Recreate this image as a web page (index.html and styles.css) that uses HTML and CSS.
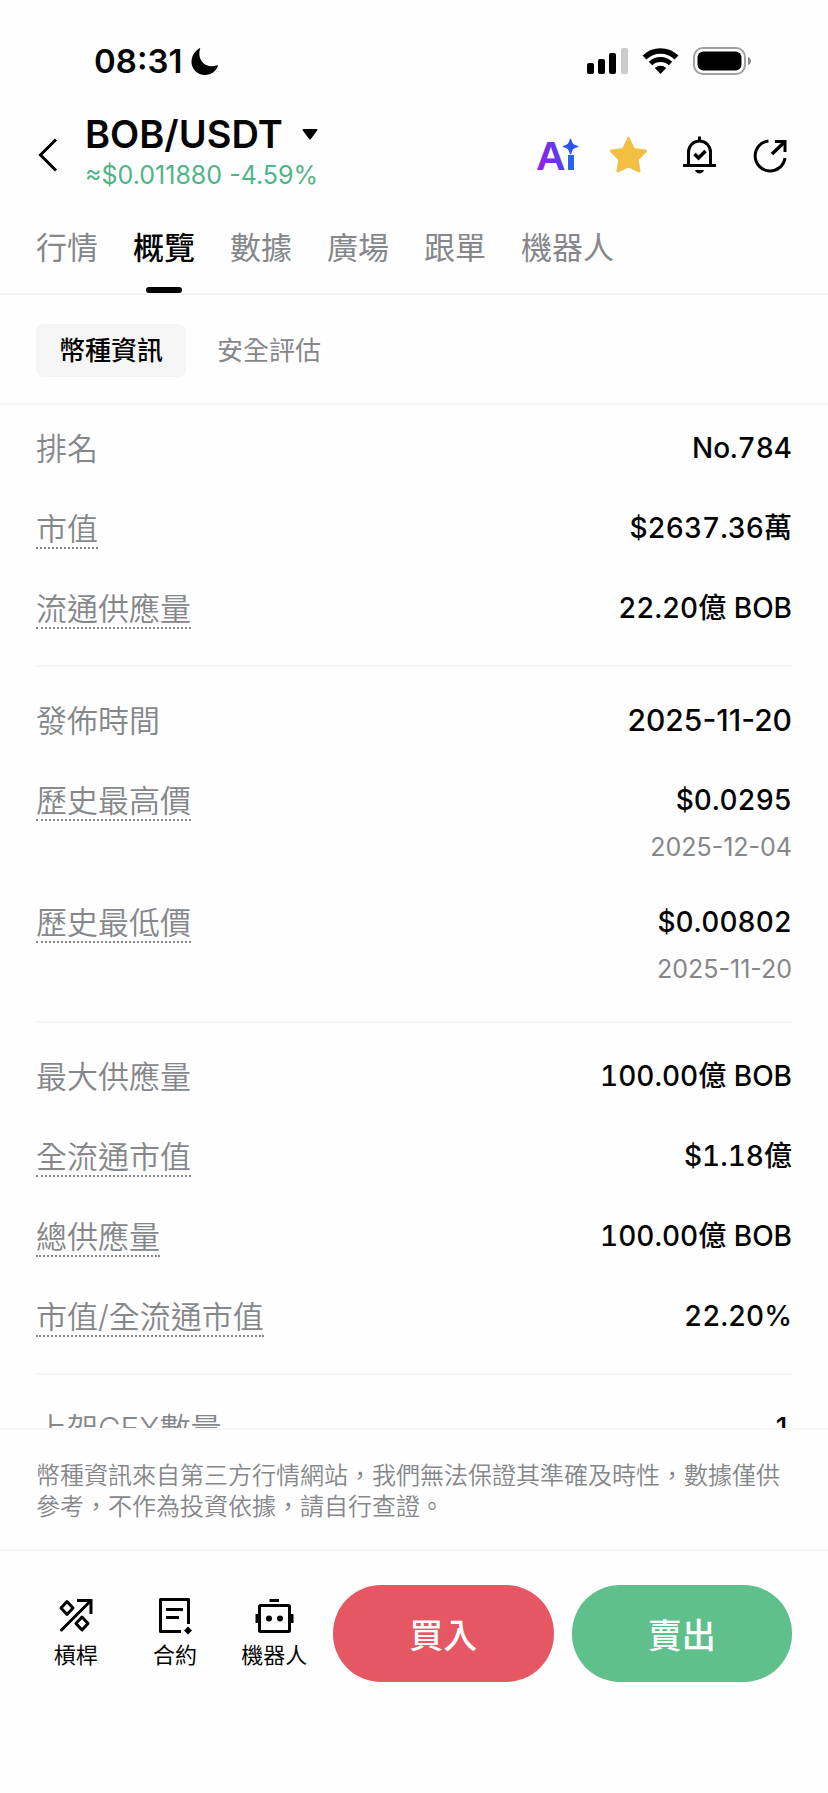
FILE: index.html
```html
<!DOCTYPE html>
<html lang="zh-Hant">
<head>
    <meta charset="UTF-8">
    <meta name="viewport" content="width=device-width, initial-scale=1.0">
    <title>BOB/USDT</title>
    <link rel="stylesheet" href="styles.css">
</head>

<body>

<div class="app">
    <!-- Status bar -->
    <div class="status">
        <div class="status-left">
            <span class="time">08:31</span>
            <svg width="27" height="27" viewBox="0 0 28 28"><path d="M9.500 0.500C7 8 10 16 18 18.500c3.500 1 6.500.5 9-.5.7-.3 1.100.1.900.7C26 24 21 28 14.500 28 7 28 .5 22 .5 14.500.5 8.500 4 3 8.800.2c.5-.3.900-.1.700.3z"/></svg>
        </div>
        <div class="status-right">
            <svg width="42" height="28" viewBox="0 0 42 28">
                <rect x="1" y="16" width="7" height="11" rx="2"/>
                <rect x="12" y="12" width="7" height="15" rx="2"/>
                <rect x="23" y="6" width="7" height="21" rx="2"/>
                <rect x="35" y="1" width="7" height="26" rx="2" fill="#cbcbcb"/>
            </svg>
            <svg width="37" height="28" viewBox="0 0 37 28">
                <path d="M2.500 10.500a23 23 0 0 1 32 0" fill="none" stroke="#000" stroke-width="5.500"/>
                <path d="M8.500 16.500a14.500 14.500 0 0 1 20 0" fill="none" stroke="#000" stroke-width="5"/>
                <path d="M12.800 21a8.600 8.600 0 0 1 11.400 0L18.500 27z"/>
            </svg>
            <svg width="59" height="28" viewBox="0 0 59 28">
                <rect x="1" y="1" width="51" height="26" rx="9" fill="none" stroke="#a0a0a0" stroke-width="2"/>
                <rect x="4.500" y="4.500" width="44" height="19" rx="6"/>
                <path d="M55 10c4 1 4 7 0 8z" fill="#8c8c8c"/>
            </svg>
        </div>
    </div>

    <!-- Header -->
    <header class="header">
        <button class="icon-btn back" aria-label="返回">
            <svg width="20" height="34" viewBox="0 0 20 34"><path d="M18 1.500L2.500 17 18 32.500" fill="none" stroke="#000" stroke-width="3"/></svg>
        </button>
        <div class="pair">
            <button class="pair-name">BOB/USDT
                <svg width="16" height="11" viewBox="0 0 16 11"><path d="M1.500 0h13c1 0 1.300.8.700 1.500L8.900 10c-.5.700-1.300.7-1.800 0L.8 1.500C.2.8.5 0 1.500 0z"/></svg>
            </button>
            <p class="pair-price">≈$0.011880 -4.59%</p>
        </div>
        <div class="actions">
            <button class="icon-btn" aria-label="Ai">
                <svg width="44" height="44" viewBox="0 0 44 44">
                    <defs>
                        <linearGradient id="ai" gradientUnits="userSpaceOnUse" x1="2" y1="36" x2="42" y2="26">
                            <stop offset="0" stop-color="#9b1fe8"/>
                            <stop offset=".5" stop-color="#6a35ea"/>
                            <stop offset="1" stop-color="#1f62f5"/>
                        </linearGradient>
                    </defs>
                    <text class="ai-letter" x="1" y="37" fill="url(#ai)">A</text>
                    <rect x="33" y="22" width="6" height="15" fill="#2b62f2"/>
                    <path d="M35.500 6.500c1 4.500 2.500 6 7 7-4.500 1-6 2.500-7 7-1-4.500-2.500-6-7-7 4.500-1 6-2.500 7-7z" fill="#2f55f0" stroke="#2f55f0" stroke-width="1.500" stroke-linejoin="round"/>
                </svg>
            </button>
            <button class="icon-btn" aria-label="收藏">
                <svg width="44" height="44" viewBox="0 0 44 44"><path d="M22.500 5.500l5 11 12 1.500-8.500 8.500 2 11.500-10.500-5-10.500 5 2-11.500L5.500 18l12-1.500z" fill="#f0bf43" stroke="#f0bf43" stroke-width="3" stroke-linejoin="round"/></svg>
            </button>
            <button class="icon-btn" aria-label="提醒">
                <svg width="44" height="44" viewBox="0 0 44 44" fill="none" stroke="#000" stroke-width="3">
                    <path d="M11.500 32V19a11 11 0 0 1 22 0v13M6 32.500h33M22.500 3.500V8"/>
                    <path d="M17.500 21l4 4 7-7" stroke-width="3.500"/>
                    <path d="M18 37h9c-.5 2-2.500 3.500-4.500 3.500S18.500 39 18 37z" fill="#000" stroke="none"/>
                </svg>
            </button>
            <button class="icon-btn" aria-label="分享">
                <svg width="44" height="44" viewBox="0 0 44 44" fill="none" stroke="#000" stroke-width="3">
                    <path d="M20.500 8a15 15 0 1 0 16.500 17" />
                    <path d="M24 21L36 9.500" stroke-width="3.500"/>
                    <path d="M27 8.500h10V19"/>
                </svg>
            </button>
        </div>
    </header>

    <!-- Main tabs -->
    <nav class="tabs">
        <a href="#market">行情</a>
        <a href="#overview" class="active">概覽</a>
        <a href="#data">數據</a>
        <a href="#square">廣場</a>
        <a href="#copy">跟單</a>
        <a href="#bot">機器人</a>
    </nav>

    <!-- Sub tabs -->
    <div class="subtabs">
        <button class="active">幣種資訊</button>
        <button>安全評估</button>
    </div>

    <!-- Coin info -->
    <main class="info">
        <dl class="group">
            <div class="row"><dt>排名</dt><dd>No.784</dd></div>
            <div class="row"><dt><button class="term">市值</button></dt><dd>$2637.36萬</dd></div>
            <div class="row"><dt><button class="term">流通供應量</button></dt><dd>22.20億 BOB</dd></div>
        </dl>
        <dl class="group">
            <div class="row"><dt>發佈時間</dt><dd class="released">2025-11-20</dd></div>
            <div class="row"><dt><button class="term">歷史最高價</button></dt><dd>$0.0295<span class="date">2025-12-04</span></dd></div>
            <div class="row"><dt><button class="term">歷史最低價</button></dt><dd>$0.00802<span class="date">2025-11-20</span></dd></div>
        </dl>
        <dl class="group">
            <div class="row"><dt>最大供應量</dt><dd>100.00億 BOB</dd></div>
            <div class="row"><dt><button class="term">全流通市值</button></dt><dd>$1.18億</dd></div>
            <div class="row"><dt><button class="term">總供應量</button></dt><dd>100.00億 BOB</dd></div>
            <div class="row"><dt><button class="term">市值/全流通市值</button></dt><dd>22.20%</dd></div>
        </dl>
        <dl class="group">
            <div class="row"><dt>上架CEX數量</dt><dd>1</dd></div>
        </dl>
    </main>

    <p class="notice">幣種資訊來自第三方行情網站，我們無法保證其準確及時性，數據僅供參考，不作為投資依據，請自行查證。</p>

    <!-- Bottom bar -->
    <footer class="bottom">
        <div class="shortcuts">
            <a href="#margin">
                <svg width="40" height="40" viewBox="0 0 40 40" fill="none" stroke="#000" stroke-width="3">
                    <path d="M5.500 35L34 6.500" stroke-linecap="round"/>
                    <path d="M21 5.500h14V19"/>
                    <path d="M11 6.500l6 6.500-6 6.500L5 13zM26 22l6 6.500-6 6.500-6-6.500z" stroke-linejoin="round"/>
                </svg>
                槓桿
            </a>
            <a href="#futures">
                <svg width="40" height="40" viewBox="0 0 40 40" fill="none" stroke="#000" stroke-width="3">
                    <path d="M26 36.500H5.500v-32h28V29" stroke-linejoin="round"/>
                    <path d="M11 14.500h17M11 22.500h13"/>
                    <path d="M33 31.500l4 4-4 4-4-4z" fill="#000" stroke="none"/>
                </svg>
                合約
            </a>
            <a href="#robot">
                <svg width="40" height="40" viewBox="0 0 40 40" fill="none" stroke="#000" stroke-width="3">
                    <rect x="5.500" y="10.500" width="30" height="26" rx="1"/>
                    <path d="M15.500 5.500h9.500"/>
                    <path d="M3.500 19v9M37.500 19v9" stroke-width="4"/>
                    <circle cx="15" cy="23.500" r="3" fill="#000" stroke="none"/>
                    <circle cx="26" cy="23.500" r="3" fill="#000" stroke="none"/>
                </svg>
                機器人
            </a>
        </div>
        <button class="trade buy">買入</button>
        <button class="trade sell">賣出</button>
    </footer>
</div>

</body>
</html>
```
FILE: styles.css
```css
* {
    box-sizing: border-box;
}

body {
    margin: 0;
    background: #fefefe;
    color: #050505;
    font-family: Inter, "Noto Sans CJK TC", sans-serif;
}

button {
    margin: 0;
    padding: 0;
    border: none;
    background: none;
    color: inherit;
    font: inherit;
    cursor: pointer;
}

a {
    color: inherit;
    text-decoration: none;
}

svg {
    display: block;
    flex: none;
    overflow: visible;
}

.app {
    display: flex;
    flex-direction: column;
    height: 100vh;
}

/* ===== Status bar ===== */
.status {
    display: flex;
    justify-content: space-between;
    padding: 41px 76px 31px 94px;
}

.status-left,
.status-right {
    display: flex;
    align-items: center;
    height: 40px;
}

.status-left {
    gap: 9px;
}

.status-right {
    gap: 14px;
}

.time {
    font-size: 33px;
    font-weight: 600;
}

/* ===== Header ===== */
.header {
    display: flex;
    align-items: center;
    padding: 0 36px;
}

.icon-btn {
    display: flex;
}

.back {
    width: 49px;
    padding: 4px 2px 0;
}

.pair-name {
    display: flex;
    align-items: center;
    gap: 19px;
    font-size: 38px;
    font-weight: 600;
    line-height: 44px;
}

.pair-price {
    margin: 0;
    color: #4fb487;
    font-size: 25px;
    line-height: 38px;
}

.actions {
    display: flex;
    gap: 27px;
    margin-left: auto;
    padding-top: 4px;
}

.ai-letter {
    font-family: "Liberation Sans", sans-serif;
    font-size: 41px;
    font-weight: 700;
}

/* ===== Tabs ===== */
.tabs {
    display: flex;
    gap: 35px;
    padding: 0 36px;
    border-bottom: 2px solid #f5f5f5;
    color: #85878a;
    font-size: 31px;
    line-height: 48px;
}

.tabs a {
    position: relative;
    padding: 30px 0 21px;
}

.tabs .active {
    color: #050505;
    font-weight: 500;
}

.tabs .active::after {
    content: "";
    position: absolute;
    bottom: 0;
    left: calc(50% - 18px);
    width: 36px;
    height: 6px;
    border-radius: 3px;
    background: #050505;
}

.subtabs {
    display: flex;
    gap: 8px;
    padding: 29px 36px 26px;
    border-bottom: 2px solid #f5f5f5;
    color: #85878a;
    font-size: 26px;
    line-height: 53px;
}

.subtabs button {
    padding: 0 23px;
    border-radius: 8px;
}

.subtabs .active {
    background: #f5f5f5;
    color: #050505;
    font-weight: 500;
}

/* ===== Coin info ===== */
.info {
    flex: 1;
    min-height: 0;
    padding: 0 36px;
    overflow-y: auto;
    scrollbar-width: none;
}

.group {
    display: flex;
    flex-direction: column;
    gap: 36px;
    margin: 0;
    padding: 32px 0 34px;
    border-bottom: 2px solid #f7f7f7;
}

.group:first-child {
    padding-top: 22px;
}

.group:last-child {
    border-bottom: none;
}

.row {
    display: flex;
    justify-content: space-between;
    line-height: 44px;
}

.row dt {
    color: #85878a;
    font-size: 31px;
    font-weight: 350;
}

.row dd {
    margin: 0;
    font-size: 28px;
    font-variant-numeric: tabular-nums;
    font-weight: 500;
    line-height: 42px;
    text-align: right;
}

.row .released {
    font-size: 30px;
    font-variant-numeric: normal;
}

.term {
    height: 42px;
    border-bottom: 2px dotted #85878a;
    line-height: 44px;
}

.date {
    display: block;
    margin-top: 8px;
    color: #85878a;
    font-size: 25px;
    font-variant-numeric: normal;
    font-weight: 400;
    line-height: 36px;
}

.notice {
    margin: 0;
    padding: 30px 36px 27px;
    border-top: 2px solid #f7f7f7;
    color: #85878a;
    font-size: 24px;
    font-weight: 350;
    line-height: 31px;
}

/* ===== Bottom bar ===== */
.bottom {
    display: flex;
    gap: 18px;
    padding: 34px 36px 111px;
    border-top: 2px solid #f7f7f7;
}

.shortcuts {
    display: grid;
    grid-template-columns: repeat(3, 1fr);
    flex: 0 0 298px;
    margin-left: -10px;
    margin-right: -9px;
}

.shortcuts a {
    display: flex;
    flex-direction: column;
    align-items: center;
    gap: 2px;
    padding-top: 10px;
    font-size: 22px;
    line-height: 36px;
}

.trade {
    flex: 1;
    height: 97px;
    border-radius: 48px;
    color: #fff;
    font-size: 34px;
    font-weight: 500;
}

.buy {
    background: #e45763;
}

.sell {
    background: #5fc08b;
}
```
